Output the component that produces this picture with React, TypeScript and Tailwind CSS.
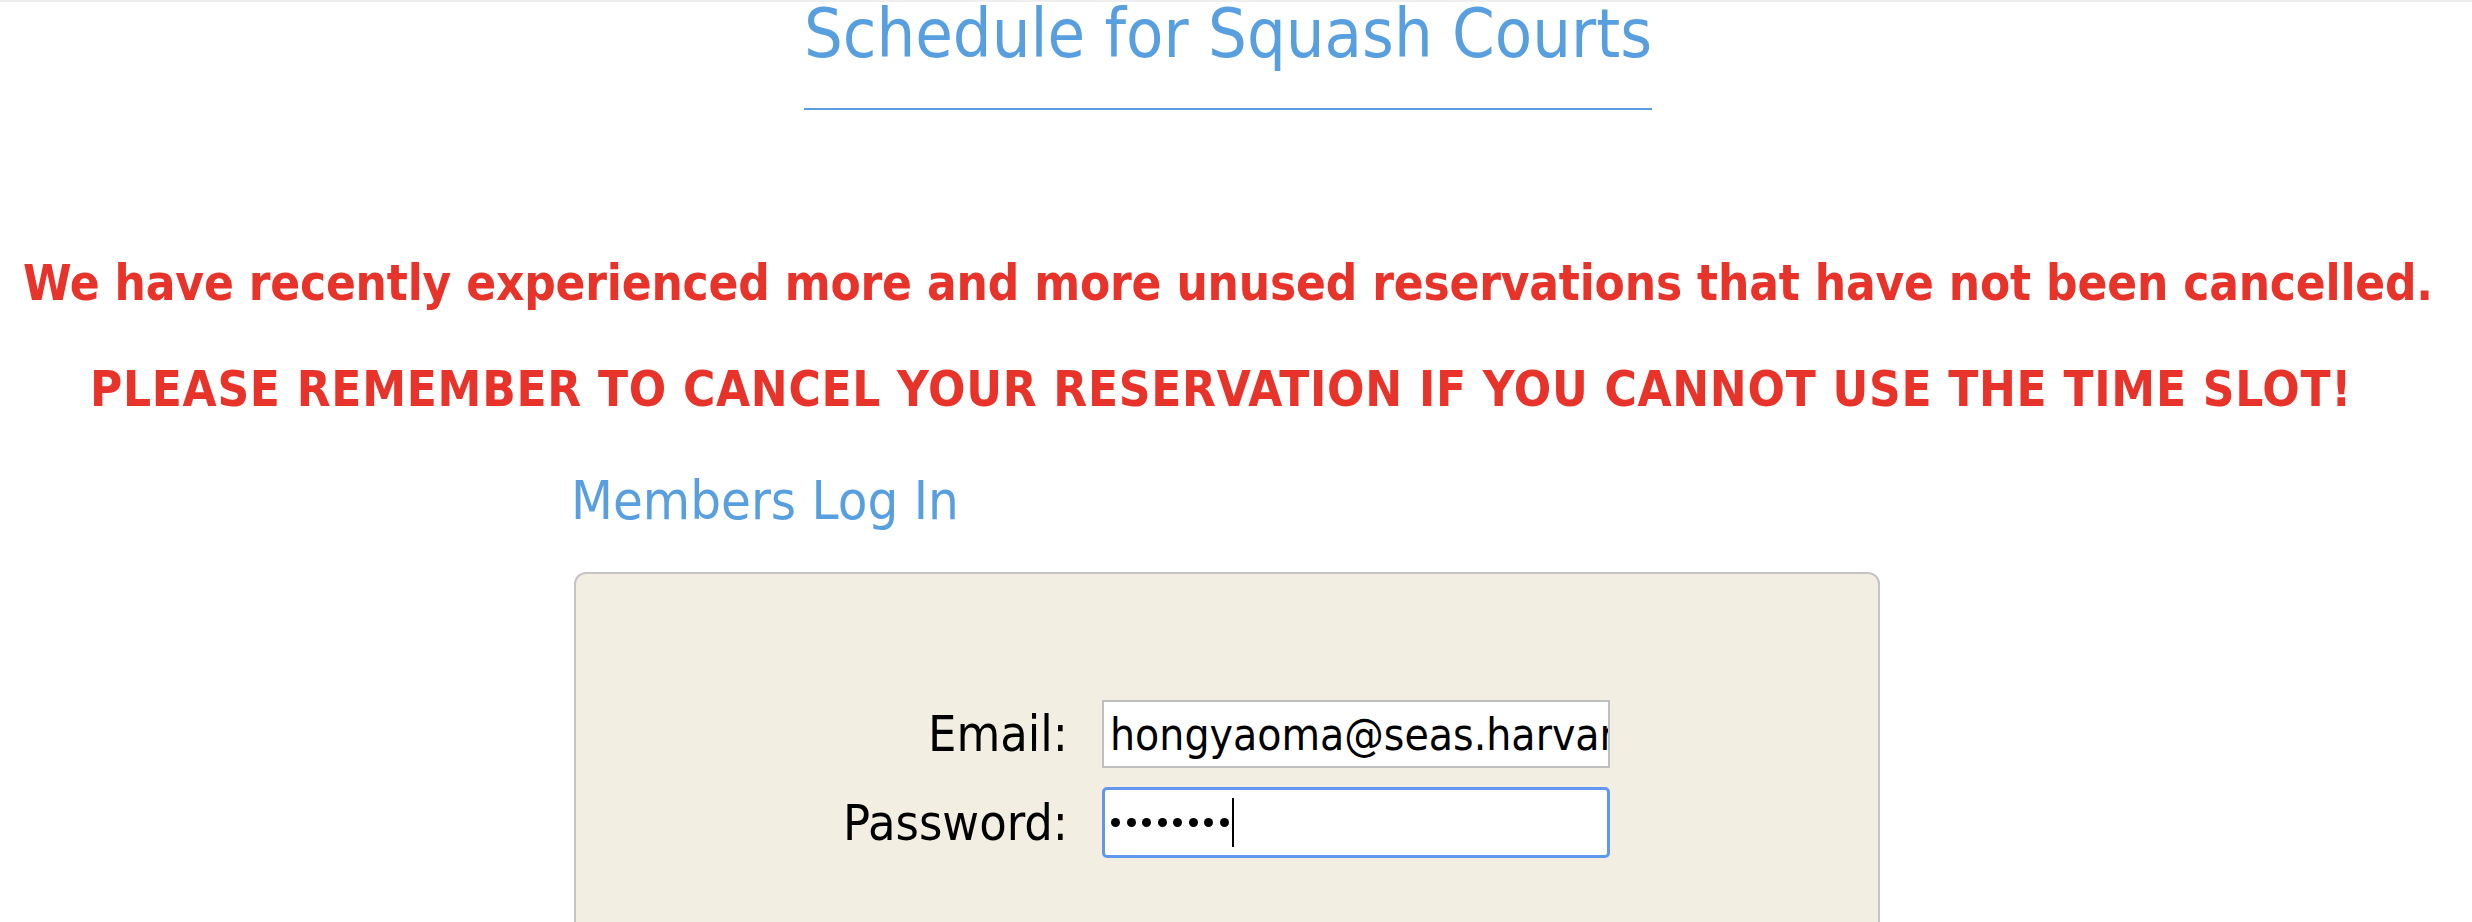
import { useState } from 'react';

export default function App() {
	const [email] = useState('hongyaoma@seas.harvard.edu');

	return (
		<main className="min-h-screen overflow-hidden border-t-2 border-[#efefef] bg-white pr-[16px] font-['DejaVu_Sans_Condensed','DejaVu_Sans',sans-serif] font-stretch-condensed">
			{/* Title */}
			<div className="flex justify-center">
				<h1 className="border-b-2 border-[#589fdf] pb-[42px] text-[68px] leading-[64px] font-normal text-[#589fdf]">
					Schedule for Squash Courts
				</h1>
			</div>

			{/* Notice */}
			<div className="mt-[146px] text-center font-bold text-[#e8332a]">
				<p className="text-[49px] leading-[56px] tracking-[-0.2px]">
					We have recently experienced more and more unused reservations that have not been cancelled.
				</p>
				<p className="mt-[50px] pr-[14px] text-[49px] leading-[56px] tracking-[0.7px]">
					PLEASE REMEMBER TO CANCEL YOUR RESERVATION IF YOU CANNOT USE THE TIME SLOT!
				</p>
			</div>

			{/* Login */}
			<div className="mx-auto mt-[51px] w-[1314px]">
				<h2 className="text-[54px] leading-[64px] text-[#589fdf]">Members Log In</h2>

				<div className="mt-[39px] ml-[3px] h-[420px] w-[1306px] rounded-t-[12px] border-2 border-[#c4c4c4] bg-[#f2eee1] pt-[126px]">
					<div className="grid grid-cols-[492px_508px] items-center gap-x-[34px] gap-y-[19px] text-[50px] leading-[58px] text-black">
						<label htmlFor="email" className="text-right">Email:</label>
						<input
							id="email"
							type="text"
							readOnly
							value={email}
							className="h-[68px] w-[508px] border-2 border-[#bfbfbf] bg-white pl-[6px] text-[44px] text-black outline-none"
						/>

						<label htmlFor="password" className="text-right">Password:</label>
						<div
							id="password"
							className="flex h-[71px] w-[508px] items-center rounded-[5px] border-[3px] border-[#6198ef] bg-white pl-[6px]"
						>
							<div className="flex items-center gap-[6.5px]">
								{Array.from({ length: 8 }, (_, i) => (
									<span key={i} className="h-[9px] w-[9px] rounded-full bg-black" />
								))}
							</div>
							<span className="ml-[3px] h-[49px] w-[2px] bg-black" />
						</div>
					</div>
				</div>
			</div>
		</main>
	);
}
